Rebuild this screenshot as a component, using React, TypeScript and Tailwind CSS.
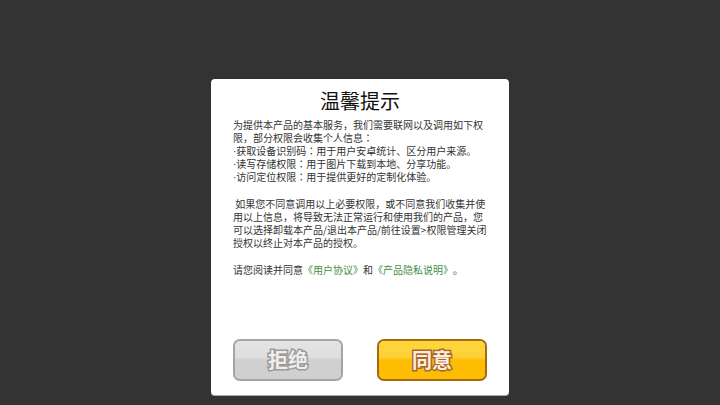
import React from "react";

const permissions = [
  { name: "获取设备识别码", usage: "用于用户安卓统计、区分用户来源。" },
  { name: "读写存储权限", usage: "用于图片下载到本地、分享功能。" },
  { name: "访问定位权限", usage: "用于提供更好的定制化体验。" },
];

// vertically centred full-width colon
const Colon: React.FC = () => (
  <span className="font-['Noto_Sans_CJK_JP',sans-serif] leading-none">：</span>
);

const App: React.FC = () => {
  return (
    <div className="flex min-h-screen items-end justify-center bg-[#333333] pb-[9px] font-['Noto_Sans_CJK_SC',sans-serif]">
      <main
        role="dialog"
        aria-labelledby="tips-title"
        className="w-full max-w-[298px] rounded-[4px] border-b border-[#a8a8a8] bg-white px-[22px] pt-[7px] pb-[14px]"
      >
        <h1
          id="tips-title"
          className="text-center text-[20px] leading-[30px] text-[#111111]"
        >
          温馨提示
        </h1>
        <div className="-mr-1 mt-[2px] flex flex-col gap-[14px] break-all text-[10px] leading-[13px] text-[#333333] [text-spacing-trim:space-all]">
          <div>
            <p>
              为提供本产品的基本服务，我们需要联网以及调用如下权限，部分权限会收集个人信息
              <Colon />
            </p>
            <ul>
              {permissions.map(({ name, usage }) => (
                <li key={name}>
                  <span className="font-['Liberation_Sans',sans-serif] leading-none">
                    ·
                  </span>
                  {name}
                  <Colon />
                  {usage}
                </li>
              ))}
            </ul>
          </div>
          <p className="whitespace-pre-wrap">
            {" "}
            如果您不同意调用以上必要权限，或不同意我们收集并使用以上信息，将导致无法正常运行和使用我们的产品，您可以选择卸载本产品/退出本产品/前往设置&gt;权限管理关闭授权以终止对本产品的授权。
          </p>
          <p>
            请您阅读并同意
            <a href="#agreement" className="text-[#3f8f45]">
              《用户协议》
            </a>
            和
            <a href="#privacy" className="text-[#3f8f45]">
              《产品隐私说明》
            </a>
            。
          </p>
        </div>
        <div className="mt-[63px] flex justify-between">
          <button className="h-[42px] w-[110px] rounded-[7px] border-2 border-[#a4a4a4] bg-[#d0d0d0] text-[20px] font-bold text-[#eeeeee]">
            <span className="flex h-full items-center justify-center rounded-[5px] bg-linear-to-b from-[#e4e4e4] from-0% via-[#dfdfdf] via-42% to-[#d0d0d0] to-50% [-webkit-text-stroke:3px_#9b9b9b] [paint-order:stroke_fill]">
              拒绝
            </span>
          </button>
          <button className="h-[42px] w-[110px] rounded-[7px] border-2 border-[#a5690f] bg-[#fdbd03] text-[20px] font-bold text-[#ffeedd]">
            <span className="flex h-full items-center justify-center rounded-[5px] bg-linear-to-b from-[#ffd63c] from-0% via-[#ffd038] via-42% to-[#fdbd03] to-50% [-webkit-text-stroke:3px_#a8682c] [paint-order:stroke_fill]">
              同意
            </span>
          </button>
        </div>
      </main>
    </div>
  );
};

export default App;
